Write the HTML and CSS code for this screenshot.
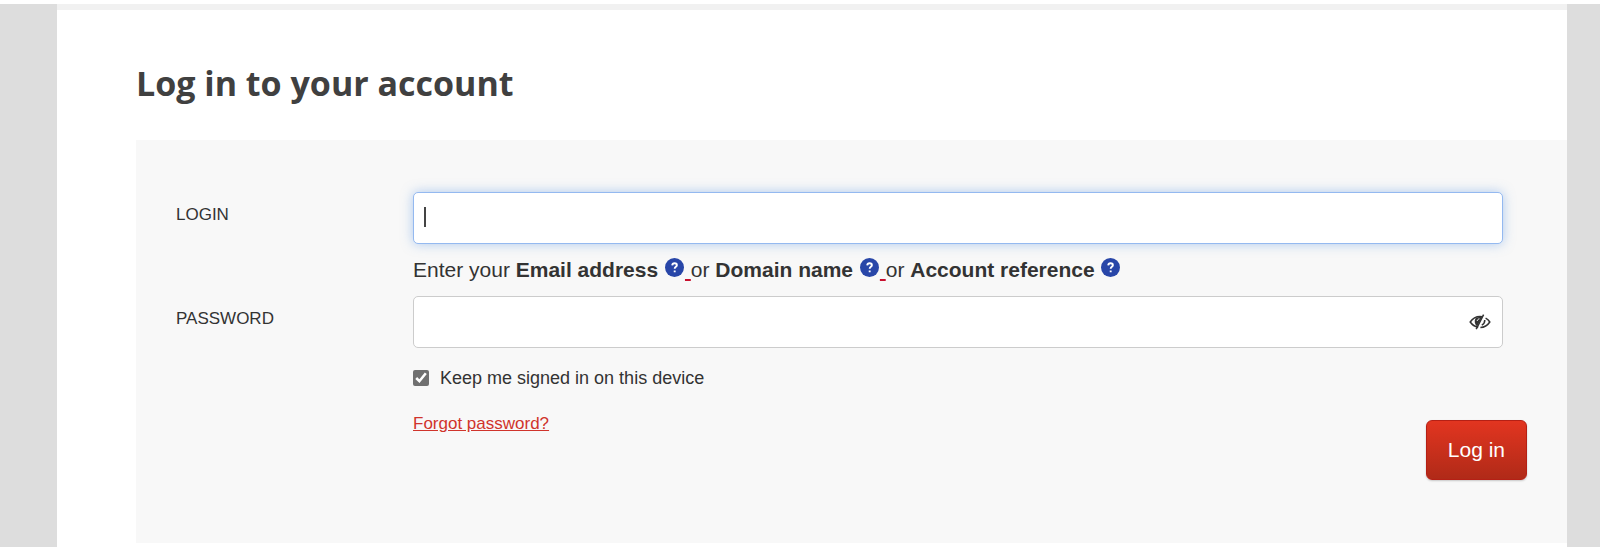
FILE: index.html
```
<!DOCTYPE html>
<html lang="en">

<head>
    <meta charset="UTF-8">
    <meta name="viewport" content="width=device-width, initial-scale=1.0">
    <title>Log in to your account</title>
    <link rel="stylesheet" href="styles.css">
</head>

<body>
    <div class="page">
        <main class="content">
            <h1>Log in to your account</h1>
            <form class="login-form">
                <div class="row">
                    <label class="name" for="login">LOGIN</label>
                    <div class="field">
                        <div class="input-wrap">
                            <input class="text-input focused" type="text" id="login" name="login">
                            <span class="caret"></span>
                        </div>
                        <p class="hint">Enter your <strong>Email address</strong>
                            <a href="#" aria-label="Email address help"><svg class="help" viewBox="0 0 20 20"><circle cx="10" cy="10" r="10"/><path d="M7.6 7.8C7.7 6.3 8.7 5.6 10.1 5.6C11.5 5.6 12.5 6.4 12.5 7.6C12.5 9.3 10.2 9.3 10.2 11.3M10.2 13.2V15"/></svg>&nbsp;</a>or <strong>Domain name</strong>
                            <a href="#" aria-label="Domain name help"><svg class="help" viewBox="0 0 20 20"><circle cx="10" cy="10" r="10"/><path d="M7.6 7.8C7.7 6.3 8.7 5.6 10.1 5.6C11.5 5.6 12.5 6.4 12.5 7.6C12.5 9.3 10.2 9.3 10.2 11.3M10.2 13.2V15"/></svg>&nbsp;</a>or <strong>Account reference</strong>
                            <a href="#" aria-label="Account reference help"><svg class="help" viewBox="0 0 20 20"><circle cx="10" cy="10" r="10"/><path d="M7.6 7.8C7.7 6.3 8.7 5.6 10.1 5.6C11.5 5.6 12.5 6.4 12.5 7.6C12.5 9.3 10.2 9.3 10.2 11.3M10.2 13.2V15"/></svg></a>
                        </p>
                    </div>
                </div>
                <div class="row">
                    <label class="name" for="password">PASSWORD</label>
                    <div class="field">
                        <div class="input-wrap">
                            <input class="text-input" type="password" id="password" name="password">
                            <button class="toggle" type="button" aria-label="Show password">
                                <svg viewBox="0 0 22 16">
                                    <path class="line" d="M9.2 13.2C5.8 12.6 3 10.6 1.2 8C3.6 4.5 7 2.5 11 2.5C11.8 2.5 12.5 2.6 13.2 2.8M16.6 4.2C18.4 5.1 19.8 6.4 20.8 8C18.6 11.3 15.4 13.4 11.4 13.5"/>
                                    <path class="fill" d="M6.4 4.6C7.8 3.2 10.5 2.4 13.2 2.8L8 12.4C5.8 10.6 5 7.2 6.4 4.6Z"/>
                                    <path class="line" d="M14.6 .6L7.2 15.2M15.8 6C15.8 8.4 14.8 10.2 12.8 11.2"/>
                                    <path class="shine" d="M8.2 7C8.4 5.8 9.2 5 10.4 4.8"/>
                                </svg>
                            </button>
                        </div>
                        <div class="remember">
                            <input type="checkbox" id="remember" name="remember" checked>
                            <label for="remember">Keep me signed in on this device</label>
                        </div>
                    </div>
                </div>
                <div class="actions">
                    <a class="forgot" href="#">Forgot password?</a>
                    <button class="submit" type="submit">Log in</button>
                </div>
            </form>
        </main>
    </div>
</body>

</html>
```

FILE: styles.css
```
* {
    box-sizing: border-box;
}

body {
    margin: 0;
    padding-top: 4px;
    background-color: #fff;
    color: #333;
    font-family: "Liberation Sans", Arial, sans-serif;
}

.page {
    min-height: calc(100vh - 4px);
    padding: 0 33px 0 57px;
    background-color: #ddd;
}

.content {
    min-height: calc(100vh - 4px);
    padding-left: 79px;
    border-top: 6px solid #f1f1f1;
    background-color: #fff;
}

h1 {
    margin: 0;
    padding: 48px 0 32px;
    color: #404040;
    font-family: "Open Sans", sans-serif;
    font-size: 34px;
    font-weight: bold;
    line-height: 50px;
}

.login-form {
    padding: 52px 40px 63px;
    background-color: #f8f8f8;
}

.row {
    display: flex;
    padding-right: 24px;
}

.name {
    flex: 0 0 237px;
    padding-top: 13px;
    font-size: 17px;
    line-height: 20px;
}

.field {
    flex: 1;
}

.input-wrap {
    position: relative;
}

.text-input {
    display: block;
    width: 100%;
    height: 52px;
    padding: 0 12px;
    border: 1px solid #ccc;
    border-radius: 5px;
    outline: none;
    background-color: #fff;
    color: #333;
    font-family: inherit;
    font-size: 21px;
}

.text-input.focused,
.text-input:focus {
    border-color: #94b9f0;
    box-shadow: 0 0 12px rgba(100, 155, 230, 0.5);
}

.caret {
    position: absolute;
    top: 15px;
    left: 11px;
    width: 2px;
    height: 20px;
    background-color: #444;
}

.hint {
    margin: 0;
    padding: 12px 0;
    font-size: 21px;
    line-height: 28px;
}

.hint a {
    color: #c8102e;
}

.help {
    width: 19px;
    height: 19px;
    margin: 0 1px;
    vertical-align: 0;
}

.help circle {
    fill: #2846a8;
}

.help path {
    fill: none;
    stroke: #fff;
    stroke-width: 2;
}

.toggle {
    position: absolute;
    top: 18px;
    right: 12px;
    padding: 0;
    border: none;
    background: none;
    cursor: pointer;
}

.toggle svg {
    display: block;
    width: 22px;
    height: 16px;
}

.toggle .line {
    fill: none;
    stroke: #333;
    stroke-width: 1.5;
}

.toggle .fill {
    fill: #333;
}

.toggle .shine {
    fill: none;
    stroke: #fff;
}

.remember {
    display: flex;
    align-items: center;
    gap: 11px;
    padding-top: 18px;
    font-size: 18px;
    line-height: 24px;
}

.remember input {
    width: 16px;
    height: 16px;
    margin: 0;
    accent-color: #707070;
}

.actions {
    display: flex;
    align-items: flex-start;
    justify-content: space-between;
    padding-left: 237px;
    padding-top: 22px;
}

.forgot {
    color: #d0342c;
    font-size: 17px;
    line-height: 24px;
}

.submit {
    margin-top: 8px;
    padding: 0 21px;
    border: 1px solid #b52015;
    border-radius: 6px;
    background: linear-gradient(#e23520, #b02a18);
    box-shadow: 0 1px 2px rgba(0, 0, 0, 0.2);
    color: #fff;
    font-family: inherit;
    font-size: 21px;
    line-height: 58px;
    cursor: pointer;
}

.submit:hover {
    background: #b02a18;
}
```
